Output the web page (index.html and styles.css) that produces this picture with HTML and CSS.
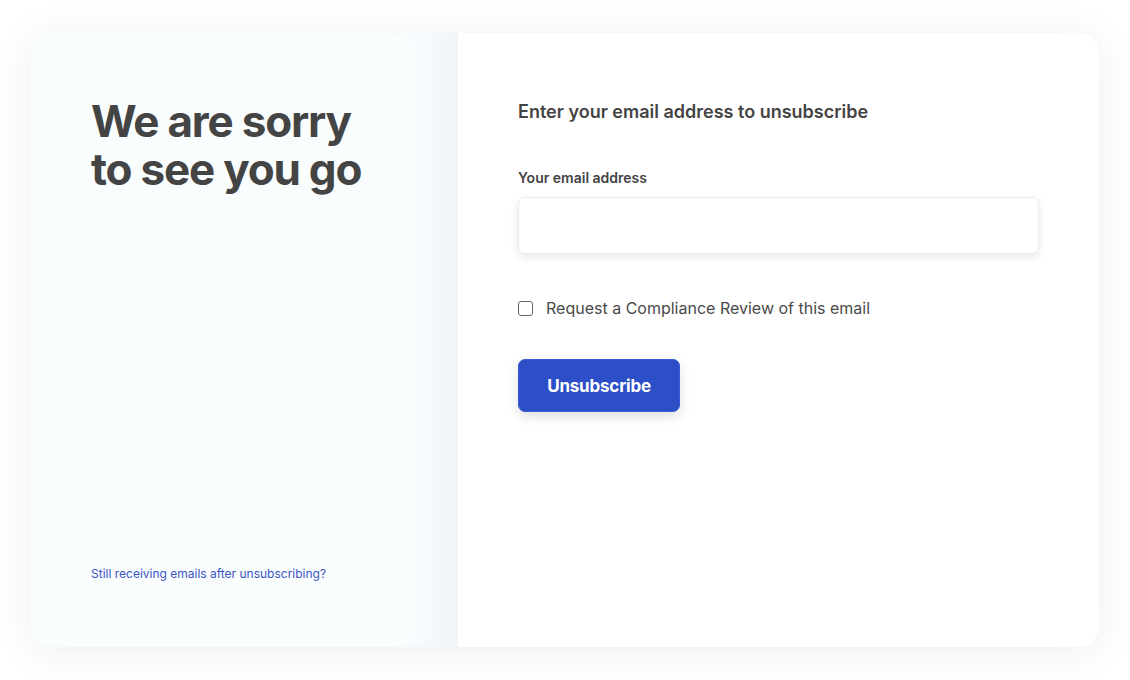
FILE: index.html
```html
<!DOCTYPE html>
<html lang="en">
<head>
  <meta charset="UTF-8">
  <title>Unsubscribe</title>
  <link rel="stylesheet" href="styles.css">
</head>
<body>
  <div class="card">
    <!-- left side -->
    <div class="side">
      <h1>We are sorry<br>to see you go</h1>
      <a href="#" class="help-link">Still receiving emails after unsubscribing?</a>
    </div>

    <!-- form side -->
    <form class="unsub-form" autocomplete="off">
      <h2>Enter your email address to unsubscribe</h2>
      <label for="email" class="field-label">Your email address</label>
      <input type="email" id="email" name="email" class="text-input">

      <label class="check-row">
        <input type="checkbox" name="review">
        <span>Request a Compliance Review of this email</span>
      </label>

      <button type="submit" class="btn">Unsubscribe</button>
    </form>
  </div>
</body>
</html>
```

FILE: styles.css
```css
body {
  font-family: Inter, "Liberation Sans", Arial, sans-serif;
  background: #fff;
  margin: 0;
  color: #444;
}
.card {
  margin: 33px 31px;
  height: 614px;
  display: flex;
  border-radius: 20px;
  overflow: hidden;
  background: #fff;
  box-shadow: 0 4px 40px rgba(40, 40, 80, 0.08);
}
.side {
  width: 427px;
  flex: none;
  box-sizing: border-box;
  padding: 64px 60px 66px;
  background: #f9fdfe;
  box-shadow: inset -50px 0 40px -30px rgba(70, 80, 130, 0.06);
  display: flex;
  flex-direction: column;
  justify-content: space-between;
}
h1 {
  margin: 0;
  font-size: 44px;
  line-height: 48px;
  font-weight: 700;
  letter-spacing: -1.2px;
  color: #444;
}
.help-link {
  font-size: 12px;
  color: #3b55c2;
  text-decoration: none;
}
.unsub-form {
  flex: 1;
  padding: 67px 60px 0;
  display: flex;
  flex-direction: column;
  align-items: flex-start;
}
h2 {
  margin: 0 0 45px;
  font-size: 18px;
  line-height: 24px;
  font-weight: 600;
  color: #444;
}
.field-label {
  font-size: 14px;
  font-weight: 600;
  margin-bottom: 11px;
}
.text-input {
  width: 100%;
  height: 57px;
  box-sizing: border-box;
  border: 1px solid #ececec;
  border-radius: 7px;
  box-shadow: 0 3px 8px rgba(0, 0, 0, 0.1);
  padding: 0 14px;
  font-size: 16px;
  margin: 0 0 44px;
}
.check-row {
  display: flex;
  align-items: center;
  gap: 13px;
  font-size: 16px;
  color: #4a4a4a;
}
.check-row input {
  appearance: none;
  width: 15px;
  height: 15px;
  margin: 0;
  border: 1.5px solid #666;
  border-radius: 3px;
  box-sizing: border-box;
}
.btn {
  margin-top: 41px;
  width: 162px;
  height: 53px;
  background: #2c4ec6;
  color: #fff;
  border: 1px solid #3a5ad6;
  border-radius: 7px;
  font-family: inherit;
  font-size: 17px;
  font-weight: 700;
  letter-spacing: -0.2px;
  box-shadow: 0 5px 12px rgba(0, 0, 0, 0.12);
  cursor: pointer;
}
```
